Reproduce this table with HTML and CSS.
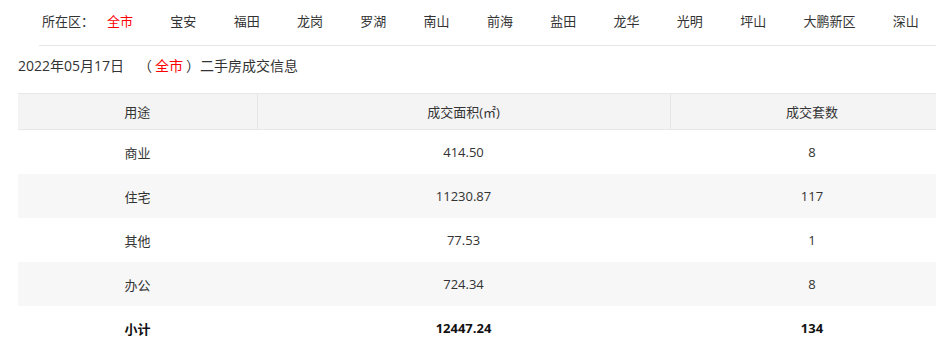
FILE: index.html
```html
<!DOCTYPE html>
<html lang="zh-CN">
<head>
<meta charset="utf-8">
<title>二手房成交信息</title>
<link rel="stylesheet" href="styles.css">
</head>
<body>
<div class="page">
  <nav class="district">
    <span class="label">所在区：</span>
    <ul class="items">
      <li class="active">全市</li>
      <li>宝安</li>
      <li>福田</li>
      <li>龙岗</li>
      <li>罗湖</li>
      <li>南山</li>
      <li>前海</li>
      <li>盐田</li>
      <li>龙华</li>
      <li>光明</li>
      <li>坪山</li>
      <li>大鹏新区</li>
      <li>深山</li>
    </ul>
  </nav>
  <h2 class="title">2022年05月17日<span class="paren">（<em>全市</em>）</span>二手房成交信息</h2>
  <table class="deals">
    <colgroup>
      <col class="c1"><col class="c2"><col class="c3">
    </colgroup>
    <thead>
      <tr><th>用途</th><th>成交面积(㎡)</th><th>成交套数</th></tr>
    </thead>
    <tbody>
      <tr><td>商业</td><td>414.50</td><td>8</td></tr>
      <tr><td>住宅</td><td>11230.87</td><td>117</td></tr>
      <tr><td>其他</td><td>77.53</td><td>1</td></tr>
      <tr><td>办公</td><td>724.34</td><td>8</td></tr>
      <tr class="total"><td>小计</td><td>12447.24</td><td>134</td></tr>
    </tbody>
  </table>
</div>
</body>
</html>
```

FILE: styles.css
```css
html, body {
  margin: 0;
  padding: 0;
  background: #fff;
  overflow: hidden;
}
body {
  font-family: "Open Sans", "Noto Sans CJK SC", sans-serif;
  color: #333;
  font-size: 13px;
}
.page {
  width: 936px;
}
.district {
  display: flex;
  align-items: center;
  height: 45px;
  margin-left: 39px;
  padding-left: 3px;
  border-bottom: 1px solid #e6e6e6;
  box-sizing: content-box;
  font-family: "Noto Sans CJK SC", sans-serif;
  font-size: 13px;
  line-height: 18px;
  padding-bottom: 0;
}
.district .label {
  margin-right: 13px;
  margin-top: -4px;
}
.items {
  display: flex;
  gap: 37.3px;
  list-style: none;
  margin: -4px 0 0 0;
  padding: 0;
  white-space: nowrap;
}
.items li.active {
  color: #f00;
}
.title {
  margin: 0;
  padding: 10px 0 0 18px;
  height: 36px;
  box-sizing: border-box;
  font-size: 14px;
  font-weight: normal;
  line-height: 20px;
  font-family: "Open Sans", "Noto Sans CJK SC", sans-serif;
  white-space: nowrap;
}
.title .paren {
  margin-left: 14px;
}
.title em {
  font-style: normal;
  color: #f00;
  margin: 0 3px;
}
.deals {
  margin: 11px 0 0 18px;
  width: 936px;
  border-collapse: collapse;
  table-layout: fixed;
}
.deals .c1 { width: 239px; }
.deals .c2 { width: 413px; }
.deals .c3 { width: 284px; }
.deals th {
  height: 35px;
  background: #f4f4f4;
  border-top: 1px solid #e8e8e8;
  border-bottom: 1px solid #e8e8e8;
  border-right: 1px solid #e6e6e6;
  font-weight: normal;
  font-size: 13px;
  padding: 0;
  text-align: center;
  color: #333;
}
.deals td {
  height: 44px;
  padding: 0;
  text-align: center;
  font-size: 13px;
}
.deals tbody tr:nth-child(even) td {
  background: #f7f7f7;
}
.deals tr.total td {
  font-weight: bold;
  color: #111;
}
```
